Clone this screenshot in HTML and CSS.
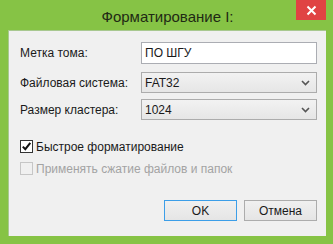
FILE: index.html
```html
<!DOCTYPE html>
<html lang="ru">
<head>
<meta charset="utf-8">
<link rel="stylesheet" href="styles.css">
</head>
<body>
<div class="window">
  <div class="titlebar">
    <span class="title">Форматирование I:</span>
    <div class="close">
      <svg width="11" height="11" viewBox="0 0 11 11"><path d="M1.5 1.5 L9.5 9.5 M9.5 1.5 L1.5 9.5" stroke="#fff" stroke-width="2" fill="none"/></svg>
    </div>
  </div>
  <div class="client">
    <div class="form">
      <label class="lbl r1">Метка тома:</label>
      <div class="input r1">ПО ШГУ</div>
      <label class="lbl r2">Файловая система:</label>
      <div class="combo r2"><span>FAT32</span><svg class="chev" width="9" height="6" viewBox="0 0 9 6"><path d="M1 1 L4.5 4.5 L8 1" stroke="#555" stroke-width="1.6" fill="none"/></svg></div>
      <label class="lbl r3">Размер кластера:</label>
      <div class="combo r3"><span>1024</span><svg class="chev" width="9" height="6" viewBox="0 0 9 6"><path d="M1 1 L4.5 4.5 L8 1" stroke="#555" stroke-width="1.6" fill="none"/></svg></div>
    </div>
    <div class="checks">
      <div class="check">
        <span class="box"><svg width="11" height="11" viewBox="0 0 11 11"><path d="M1.8 5.6 L4.3 8.2 L9.3 1.8" stroke="#111" stroke-width="2" fill="none"/></svg></span>
        <span>Быстрое форматирование</span>
      </div>
      <div class="check disabled">
        <span class="box"></span>
        <span>Применять сжатие файлов и папок</span>
      </div>
    </div>
    <div class="buttons">
      <div class="btn default">OK</div>
      <div class="btn">Отмена</div>
    </div>
  </div>
</div>
</body>
</html>
```

FILE: styles.css
```css
html, body {
  margin: 0;
  padding: 0;
}
body {
  width: 333px;
  height: 244px;
  overflow: hidden;
  font-family: "Liberation Sans", Arial, sans-serif;
  font-size: 12px;
  color: #1a1a1a;
}
.window {
  width: 333px;
  height: 244px;
  background: #86c345;
  display: flex;
  flex-direction: column;
}
.titlebar {
  position: relative;
  height: 30px;
  display: flex;
  align-items: center;
  justify-content: center;
}
.title {
  font-size: 15px;
  color: #1f2a14;
  margin-top: 2px;
  margin-left: 2px;
}
.close {
  position: absolute;
  top: 0;
  right: 7px;
  width: 30px;
  height: 20px;
  background: #e04343;
  display: flex;
  align-items: center;
  justify-content: center;
}
.client {
  margin: 0 7px 8px 8px;
  flex: 1;
  background: #f0f0f0;
  border-left: 1px solid #a8c890;
  border-top: 1px solid #a8c890;
  display: flex;
  flex-direction: column;
  padding: 11px 9px 0 11px;
}
.form {
  display: grid;
  grid-template-columns: 121px 176px;
  row-gap: 7px;
  align-items: center;
}
.lbl {
  line-height: 14px;
}
.input {
  height: 20px;
  border: 1px solid #abadb3;
  background: #fff;
  line-height: 20px;
  padding-left: 3px;
}
.combo {
  height: 19px;
  border: 1px solid #acacac;
  background: linear-gradient(#f2f2f2, #e6e6e6);
  display: flex;
  align-items: center;
  justify-content: space-between;
  padding: 0 6px 0 3px;
}
.r2 { margin-top: 1px; }
.r3 { margin-top: -1px; }
.checks {
  margin-top: 20px;
  display: flex;
  flex-direction: column;
  gap: 9px;
}
.check {
  display: flex;
  align-items: center;
  gap: 3px;
  height: 13px;
}
.box {
  width: 11px;
  height: 11px;
  border: 1px solid #333;
  background: #fff;
  display: flex;
}
.disabled {
  color: #a3a3a3;
}
.disabled .box {
  border-color: #c6c6c6;
  background: #f0f0f0;
}
.buttons {
  margin-top: 25px;
  display: flex;
  justify-content: flex-end;
  gap: 7px;
}
.btn {
  width: 71px;
  height: 19px;
  border: 1px solid #acacac;
  background: linear-gradient(#f0f0f0, #e5e5e5);
  display: flex;
  align-items: center;
  justify-content: center;
}
.btn.default {
  border-color: #3c9ee8;
}
```
